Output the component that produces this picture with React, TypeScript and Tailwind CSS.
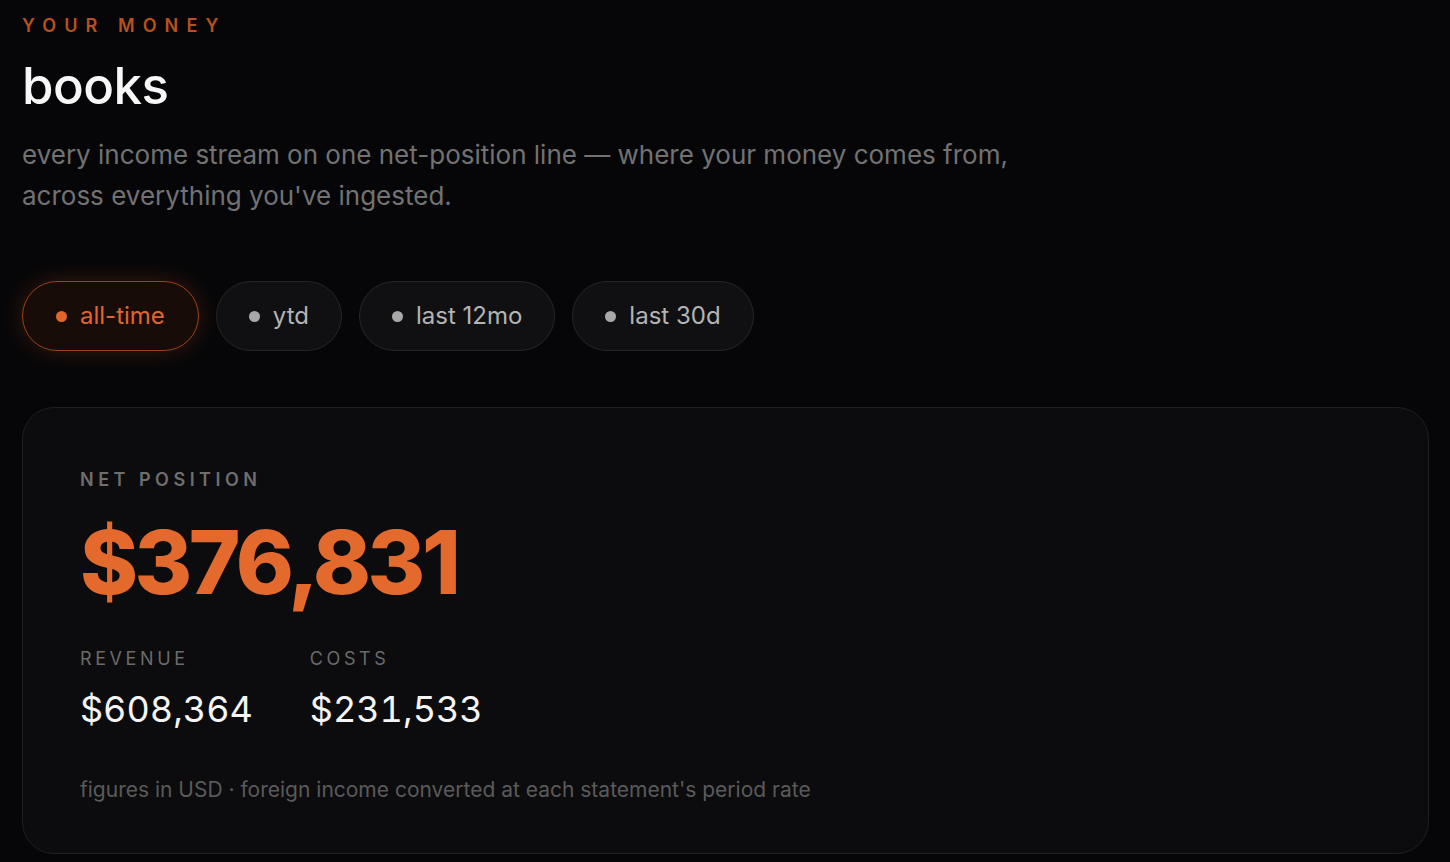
const ranges = [
  { label: "all-time", active: true },
  { label: "ytd", active: false },
  { label: "last 12mo", active: false },
  { label: "last 30d", active: false },
];

const totals = [
  { label: "REVENUE", value: "$608,364" },
  { label: "COSTS", value: "$231,533" },
];

export default function App() {
  return (
    <div className="min-h-[862px] bg-[#060608] pl-[22px] pr-[21px] pt-[14px] pb-[9px] font-['Inter','Noto_Sans',sans-serif] text-white">
      {/* header */}
      <p className="text-[18px] font-semibold leading-[24px] tracking-[0.45em] text-[#b8511f]">
        YOUR MONEY
      </p>
      <h1 className="mt-[20px] text-[51px] font-medium leading-[56px] tracking-[-0.01em] text-[#f7f7f7]">
        books
      </h1>
      <p className="mt-[20px] max-w-[1000px] text-[26px] leading-[41px] text-[#727272]">
        every income stream on one net-position line — where your money comes from, across everything you've ingested.
      </p>

      {/* range chips */}
      <div className="mt-[65px] flex gap-[17px]">
        {ranges.map((r) => (
          <button
            key={r.label}
            className={
              r.active
                ? "flex h-[70px] items-center gap-[13px] rounded-full border border-[#9a4219] bg-[#170c07] px-[33px] text-[24px] text-[#e2662c] shadow-[0_0_24px_rgba(224,100,40,0.22)]"
                : "flex h-[70px] items-center gap-[13px] rounded-full border border-[#262628] bg-[#101012] px-[32px] text-[24px] text-[#b4b4b4]"
            }
          >
            <span
              className={
                r.active
                  ? "size-[11px] rounded-full bg-[#e2662c]"
                  : "size-[11px] rounded-full bg-[#a8a8a8]"
              }
            />
            {r.label}
          </button>
        ))}
      </div>

      {/* net position card */}
      <div className="mt-[56px] rounded-[32px] border border-[#1f1f22] bg-[#0c0c0e] px-[57px] pt-[60px] pb-[49px]">
        <p className="text-[18px] font-semibold leading-[24px] tracking-[0.25em] text-[#6e6e6e]">
          NET POSITION
        </p>
        <p className="mt-[20px] text-[88px] font-extrabold leading-[100px] tracking-[-0.04em] text-[#e36a2c]">
          $376,831
        </p>
        <div className="mt-[35px] flex gap-[57px]">
          {totals.map((t) => (
            <div key={t.label}>
              <p className="text-[18px] leading-[24px] tracking-[0.2em] text-[#6a6a6a]">{t.label}</p>
              <p className="mt-[16px] text-[36px] leading-[44px] tabular-nums text-[#f5f5f5]">{t.value}</p>
            </div>
          ))}
        </div>
        <p className="mt-[45px] text-[21px] leading-[28px] text-[#5a5a5a]">
          figures in USD · foreign income converted at each statement's period rate
        </p>
      </div>
    </div>
  );
}
